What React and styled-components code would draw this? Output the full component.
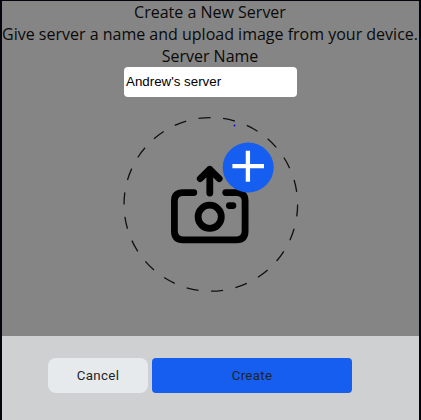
import React from "react";
import styled, { createGlobalStyle } from "styled-components";

const GlobalStyle = createGlobalStyle`
  * { box-sizing: border-box; }
  body { margin: 0; background: #050713; overflow: hidden; }
`;

const Modal = styled.main`
  display: flex;
  flex-direction: column;
  width: 421px;
  height: 420px;
  padding: 1px 2px 0;
  background: #03040c;
  font-family: "Open Sans", sans-serif;
  color: #000;
`;

const Body = styled.section`
  display: flex;
  flex-direction: column;
  align-items: center;
  height: 335px;
  background: #858585;
`;

const Line = styled.p`
  margin: 0 1px 0 0;
  font-size: 16px;
  line-height: 22px;
  white-space: nowrap;
  color: #0a0a0a;
`;

const NameInput = styled.input`
  width: 173px;
  height: 30px;
  padding: 0 2px 1px;
  border: 0;
  border-radius: 4px;
  background: #fff;
  color: #000;
  font: 13.333px "Liberation Sans", Arial, sans-serif;
  outline: none;
`;

const UploadButton = styled.button`
  width: 181px;
  height: 180px;
  margin-top: 17px;
  padding: 0;
  border: 0;
  background: none;

  svg { display: block; }
`;

const Footer = styled.footer`
  display: flex;
  gap: 4px;
  flex: 1;
  padding: 22px 0 0 46px;
  background: #cfd0d2;
`;

const Action = styled.button`
  width: ${(p) => (p.$primary ? 200 : 100)}px;
  height: 35px;
  padding: 0;
  border: 0;
  border-radius: ${(p) => (p.$primary ? 4 : 8)}px;
  background: ${(p) => (p.$primary ? "#155eef" : "#e7eaed")};
  color: #212529;
  font: 400 13.333px Roboto, sans-serif;
  letter-spacing: 0.3px;
`;

function UploadIcon() {
  return (
    <svg width="181" height="180" viewBox="120 114 181 180" fill="none">
      <circle cx="210.8" cy="204.4" r="86.8" stroke="#111" strokeWidth="1.3" pathLength="22" strokeDasharray="0.49 0.51" />
      <g stroke="#000" strokeWidth="6.8" strokeLinecap="round" strokeLinejoin="round">
        <path d="M193.8 192.6H183Q174.4 192.6 174.4 201V231Q174.4 239.8 183 239.8H236.5Q245.1 239.8 245.1 231V201Q245.1 192.6 236.5 192.6H225.7" />
        <path d="M209.8 193V169.3M200.2 178.6L209.8 169.3L219.2 178.6" />
        <circle cx="209.7" cy="216.8" r="11.6" />
        <path d="M229.4 205.6H232.9" />
      </g>
      <ellipse cx="248.2" cy="167.5" rx="25.5" ry="24.9" fill="#155eef" />
      <path d="M232.4 166.2H264M247.9 150.7V181.7" stroke="#fff" strokeWidth="4.3" />
      <circle cx="234.5" cy="125.5" r="1" fill="#1010d0" />
    </svg>
  );
}

export default function App() {
  return (
    <>
      <GlobalStyle />
      <Modal>
        <Body>
          <Line>Create a New Server</Line>
          <Line>Give server a name and upload image from your device.</Line>
          <Line>Server Name</Line>
          <NameInput defaultValue="Andrew's server" aria-label="Server Name" />
          <UploadButton aria-label="Upload image">
            <UploadIcon />
          </UploadButton>
        </Body>
        <Footer>
          <Action>Cancel</Action>
          <Action $primary>Create</Action>
        </Footer>
      </Modal>
    </>
  );
}
